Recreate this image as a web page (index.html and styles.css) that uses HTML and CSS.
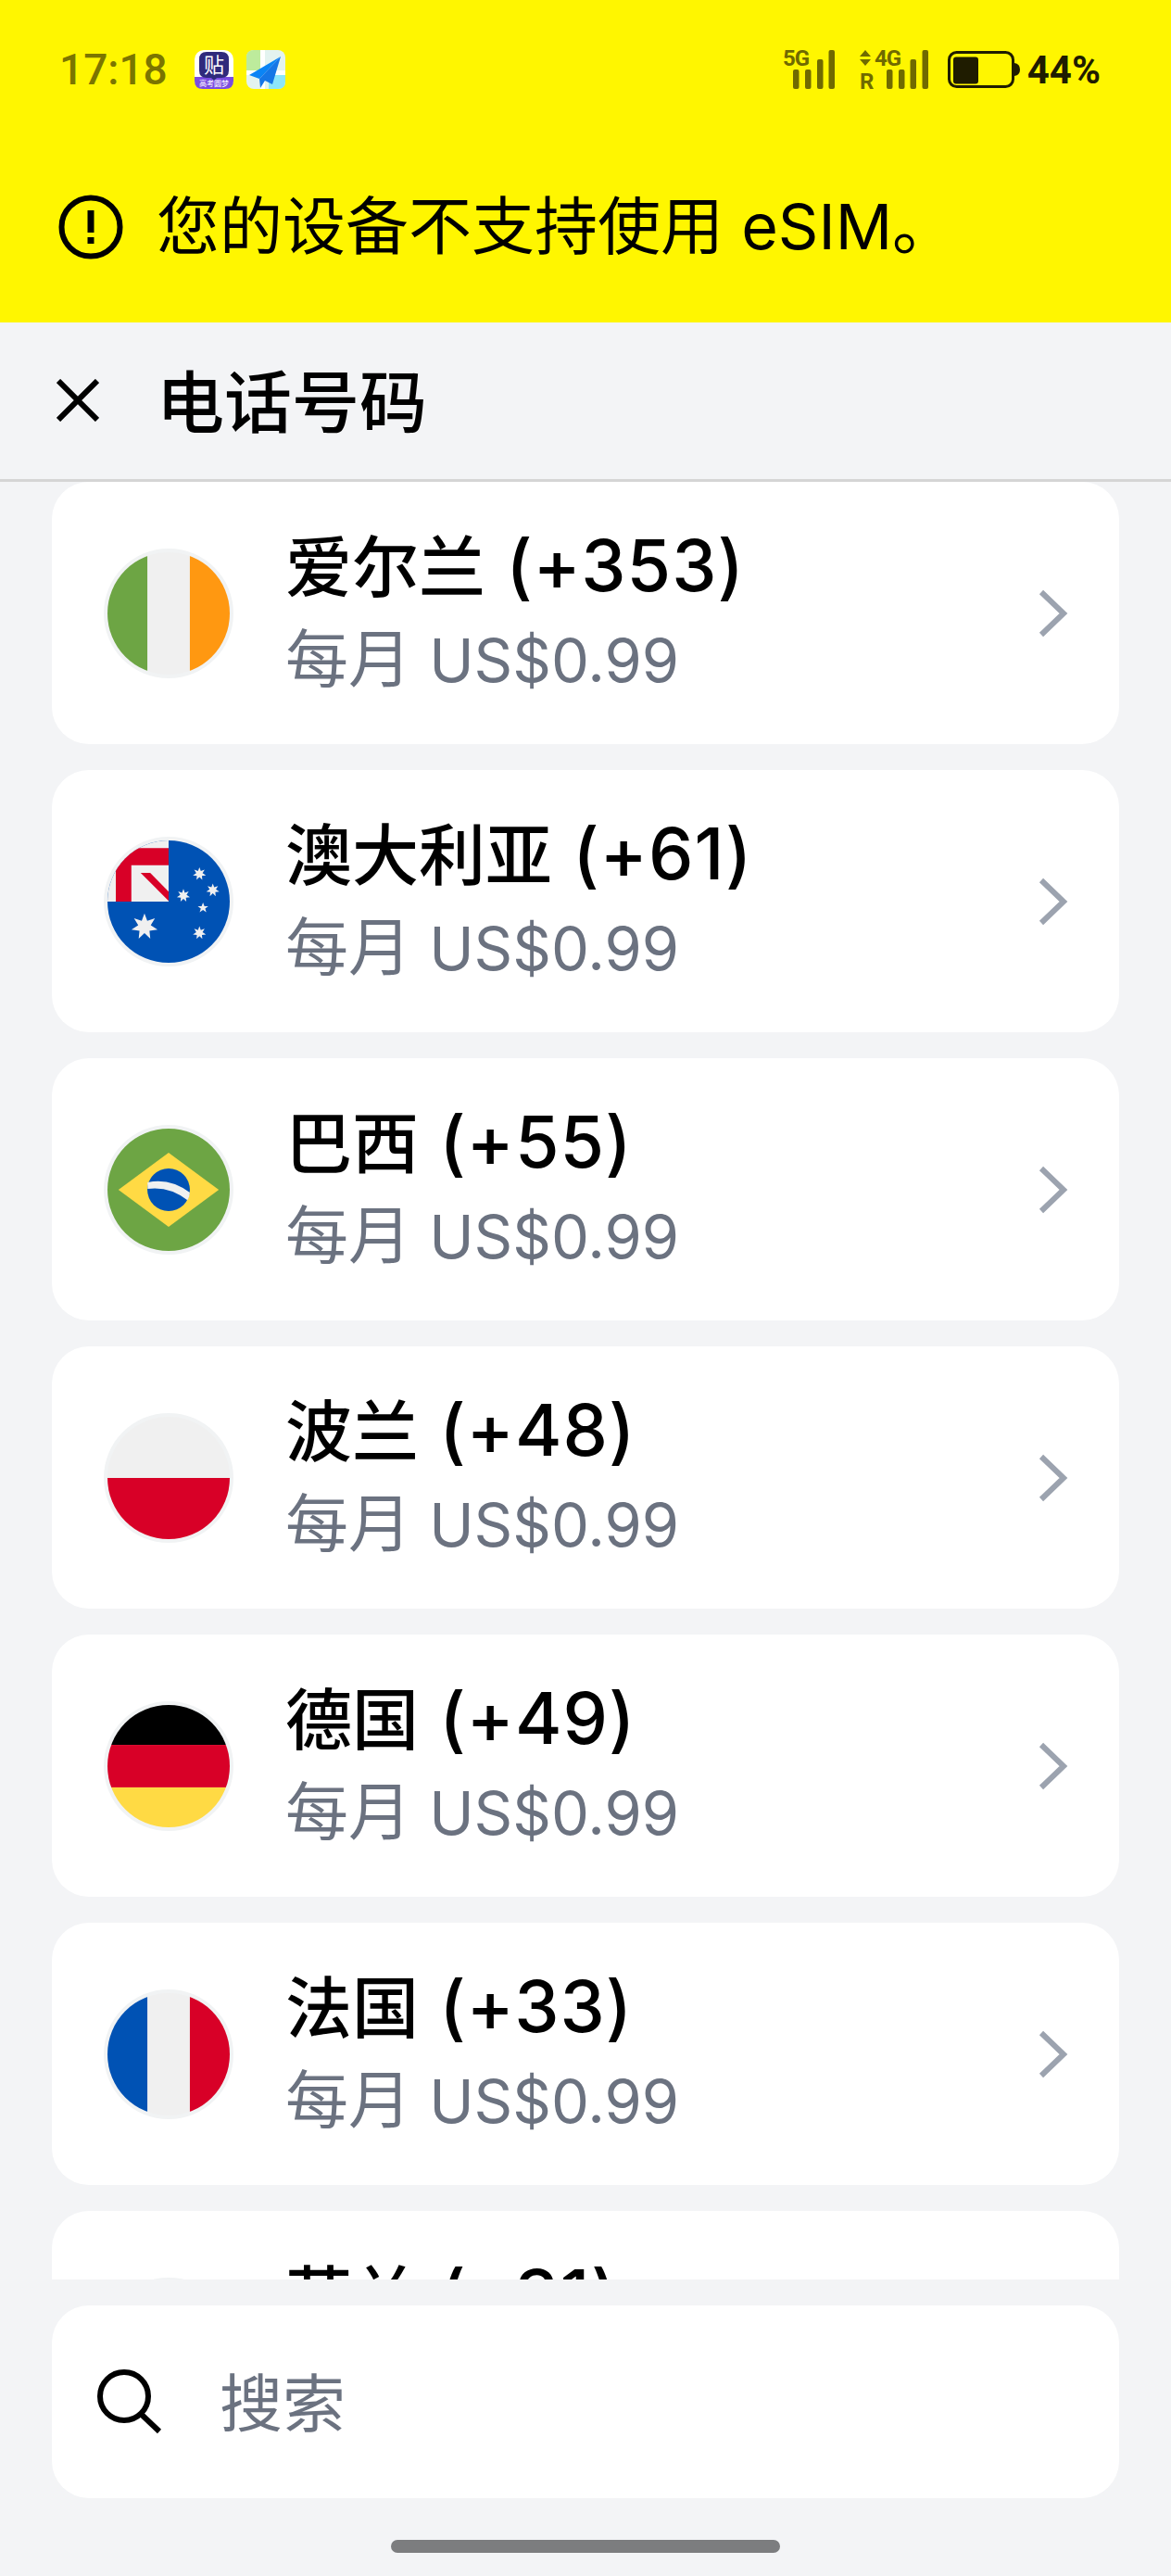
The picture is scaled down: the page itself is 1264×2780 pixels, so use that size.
FILE: index.html
```html
<!DOCTYPE html>
<html lang="zh-CN">
<head>
    <meta charset="UTF-8">
    <meta name="viewport" content="width=device-width, initial-scale=1.0">
    <title>电话号码</title>
    <link rel="stylesheet" href="styles.css">
</head>
<body>
    <svg class="defs" width="0" height="0" aria-hidden="true">
        <defs>
            <clipPath id="disc"><circle cx="256" cy="256" r="256"/></clipPath>
            <polygon id="star7" points="0,-100 20.8,-43.2 78.2,-62.3 46.8,-10.7 97.5,22.3 37.5,29.9 43.4,90.1 0,48 -43.4,90.1 -37.5,29.9 -97.5,22.3 -46.8,-10.7 -78.2,-62.3 -20.8,-43.2"/>
            <symbol id="chevron" viewBox="0 0 32 52">
                <path d="M3 3 L27 26 L3 49" fill="none" stroke="#9ca3af" stroke-width="6"/>
            </symbol>
        </defs>
    </svg>

    <header class="top-banner">
        <div class="status-bar">
            <span class="clock">17:18</span>
            <svg class="app-icon" viewBox="0 0 42 42">
                <rect width="42" height="42" rx="10" fill="#fff"/>
                <path d="M0 29 H42 V33 Q42 42 33 42 H9 Q0 42 0 33 Z" fill="#7a4ce0"/>
                <path d="M13 2 H29 Q37 2 37 10 V22 Q37 30 29 30 H24 L21 33 L18 30 H13 Q5 30 5 22 V10 Q5 2 13 2 Z" fill="#2f2a7c"/>
                <text class="app-glyph" x="21" y="24" text-anchor="middle">贴</text>
                <text class="app-tiny" x="21" y="39" text-anchor="middle">高考圆梦</text>
            </svg>
            <svg class="app-icon" viewBox="0 0 42 42">
                <rect width="42" height="42" rx="8" fill="#e3f3ef"/>
                <path d="M0 8 Q0 0 8 0 H15 V22 H0 Z" fill="#bdeb9c"/>
                <rect x="15" width="5" height="42" fill="#fff"/>
                <rect y="22" width="42" height="5" fill="#fff"/>
                <path d="M24 27 H42 V34 Q42 42 34 42 H24 Z" fill="#8de6fa"/>
                <path d="M37 7 L3 27 L14 31 Z" fill="#0a84f5"/>
                <path d="M37 7 L14 31 L15 41 L20 33 L28 37 Z" fill="#1576e6"/>
            </svg>
            <div class="status-right">
                <svg class="signal-five" viewBox="0 -6 56 56">
                    <text class="net-label" x="0" y="18">5G</text>
                    <rect x="11" y="22" width="6.5" height="21" rx="2"/>
                    <rect x="24" y="22" width="6.5" height="21" rx="2"/>
                    <rect x="37" y="11" width="6.5" height="32" rx="2"/>
                    <rect x="49.5" y="1" width="6.5" height="42" rx="2"/>
                </svg>
                <svg class="signal-four" viewBox="0 -6 74 56">
                    <path d="M6 1 L12 8 H0 Z M0 11 H12 L6 18 Z"/>
                    <text class="net-label" x="16" y="18">4G</text>
                    <text class="net-label" x="0" y="43">R</text>
                    <rect x="29" y="22" width="6.5" height="21" rx="2"/>
                    <rect x="42" y="22" width="6.5" height="21" rx="2"/>
                    <rect x="54.5" y="11" width="6.5" height="32" rx="2"/>
                    <rect x="67.5" y="1" width="6.5" height="42" rx="2"/>
                </svg>
                <svg class="battery" viewBox="0 0 78 40">
                    <rect x="1.5" y="1.5" width="69" height="37" rx="8" fill="none" stroke="#1f1c00" stroke-width="3"/>
                    <rect x="6" y="6.5" width="27" height="29" rx="3" fill="#1f1c00"/>
                    <path d="M72 13 Q78 14 78 20 Q78 26 72 27 Z" fill="#1f1c00"/>
                </svg>
                <span class="battery-level">44%</span>
            </div>
        </div>
        <div class="notice">
            <svg class="notice-icon" viewBox="0 0 70 70">
                <circle cx="35" cy="35" r="31.5" fill="none" stroke="#000" stroke-width="6"/>
                <rect x="31.5" y="17" width="7" height="24" fill="#000"/>
                <rect x="31.5" y="46" width="7" height="7" fill="#000"/>
            </svg>
            <span class="notice-text">您的设备不支持使用 eSIM。</span>
        </div>
    </header>

    <div class="title-bar">
        <svg class="close-icon" viewBox="0 0 46 46">
            <path d="M2 2 L44 44 M44 2 L2 44" fill="none" stroke="#000" stroke-width="6"/>
        </svg>
        <h1 class="page-title">电话号码</h1>
    </div>

    <main class="country-list">
        <a class="country-card">
            <span class="flag-ring">
                <svg class="flag" viewBox="0 0 512 512"><g clip-path="url(#disc)">
                    <rect width="512" height="512" fill="#f0f0f0"/>
                    <rect width="167" height="512" fill="#6da544"/>
                    <rect x="345" width="167" height="512" fill="#ff9811"/>
                </g></svg>
            </span>
            <span class="country-text">
                <span class="country-name">爱尔兰 <span class="dial">(+353)</span></span>
                <span class="country-price">每月 <span class="amount">US$0.99</span></span>
            </span>
            <svg class="chevron"><use href="#chevron"/></svg>
        </a>
        <a class="country-card">
            <span class="flag-ring">
                <svg class="flag" viewBox="0 0 512 512"><g clip-path="url(#disc)">
                    <rect width="512" height="512" fill="#0052b4"/>
                    <rect width="256" height="256" fill="#f0f0f0"/>
                    <path d="M35 32 H256 V104 H100 V256 H35 Z" fill="#d80027"/>
                    <path d="M139 136 H179 L256 214 V253 Z" fill="#d80027"/>
                    <use href="#star7" transform="translate(155 361) scale(.56)" fill="#f0f0f0"/>
                    <use href="#star7" transform="translate(385 140) scale(.28)" fill="#f0f0f0"/>
                    <use href="#star7" transform="translate(441 208) scale(.28)" fill="#f0f0f0"/>
                    <use href="#star7" transform="translate(318 231) scale(.28)" fill="#f0f0f0"/>
                    <use href="#star7" transform="translate(385 387) scale(.28)" fill="#f0f0f0"/>
                    <polygon points="400,260 406,275 422,275 409,285 414,301 400,291 386,301 391,285 378,275 394,275" fill="#f0f0f0"/>
                </g></svg>
            </span>
            <span class="country-text">
                <span class="country-name">澳大利亚 <span class="dial">(+61)</span></span>
                <span class="country-price">每月 <span class="amount">US$0.99</span></span>
            </span>
            <svg class="chevron"><use href="#chevron"/></svg>
        </a>
        <a class="country-card">
            <span class="flag-ring">
                <svg class="flag" viewBox="0 0 512 512"><g clip-path="url(#disc)">
                    <rect width="512" height="512" fill="#6da544"/>
                    <polygon points="46,256 256,101 466,256 256,411" fill="#ffda44"/>
                    <circle cx="256" cy="256" r="89" fill="#0052b4"/>
                    <path d="M168 225 Q262 205 345 268 Q343 288 335 300 Q260 240 168 252 Z" fill="#f0f0f0"/>
                </g></svg>
            </span>
            <span class="country-text">
                <span class="country-name">巴西 <span class="dial">(+55)</span></span>
                <span class="country-price">每月 <span class="amount">US$0.99</span></span>
            </span>
            <svg class="chevron"><use href="#chevron"/></svg>
        </a>
        <a class="country-card">
            <span class="flag-ring">
                <svg class="flag" viewBox="0 0 512 512"><g clip-path="url(#disc)">
                    <rect width="512" height="256" fill="#f0f0f0"/>
                    <rect y="256" width="512" height="256" fill="#d80027"/>
                </g></svg>
            </span>
            <span class="country-text">
                <span class="country-name">波兰 <span class="dial">(+48)</span></span>
                <span class="country-price">每月 <span class="amount">US$0.99</span></span>
            </span>
            <svg class="chevron"><use href="#chevron"/></svg>
        </a>
        <a class="country-card">
            <span class="flag-ring">
                <svg class="flag" viewBox="0 0 512 512"><g clip-path="url(#disc)">
                    <rect width="512" height="167" fill="#000"/>
                    <rect y="167" width="512" height="178" fill="#d80027"/>
                    <rect y="345" width="512" height="167" fill="#ffda44"/>
                </g></svg>
            </span>
            <span class="country-text">
                <span class="country-name">德国 <span class="dial">(+49)</span></span>
                <span class="country-price">每月 <span class="amount">US$0.99</span></span>
            </span>
            <svg class="chevron"><use href="#chevron"/></svg>
        </a>
        <a class="country-card">
            <span class="flag-ring">
                <svg class="flag" viewBox="0 0 512 512"><g clip-path="url(#disc)">
                    <rect width="512" height="512" fill="#f0f0f0"/>
                    <rect width="167" height="512" fill="#0052b4"/>
                    <rect x="345" width="167" height="512" fill="#d80027"/>
                </g></svg>
            </span>
            <span class="country-text">
                <span class="country-name">法国 <span class="dial">(+33)</span></span>
                <span class="country-price">每月 <span class="amount">US$0.99</span></span>
            </span>
            <svg class="chevron"><use href="#chevron"/></svg>
        </a>
        <!-- last card runs under the search area, its price line stays out of sight -->
        <a class="country-card">
            <span class="flag-ring">
                <svg class="flag" viewBox="0 0 512 512"><g clip-path="url(#disc)">
                    <rect width="512" height="167" fill="#a2001d"/>
                    <rect y="167" width="512" height="178" fill="#f0f0f0"/>
                    <rect y="345" width="512" height="167" fill="#0052b4"/>
                </g></svg>
            </span>
            <span class="country-text">
                <span class="country-name">荷兰 <span class="dial">(+31)</span></span>
                <span class="country-price">&nbsp;</span>
            </span>
            <svg class="chevron"><use href="#chevron"/></svg>
        </a>
    </main>

    <footer class="search-area">
        <div class="search-box">
            <svg class="search-icon" viewBox="0 0 70 70">
                <circle cx="29" cy="29" r="26" fill="none" stroke="#000" stroke-width="6"/>
                <path d="M47 48 L67 67" fill="none" stroke="#000" stroke-width="6"/>
            </svg>
            <span class="search-text">搜索</span>
        </div>
        <div class="home-bar"></div>
    </footer>
</body>
</html>
```

FILE: styles.css
```css
* {
    box-sizing: border-box;
}

body {
    margin: 0;
    height: 2780px;
    display: flex;
    flex-direction: column;
    overflow: hidden;
    background-color: #f3f4f6;
    color: #000;
    font-family: Inter, "Noto Sans CJK SC", sans-serif;
}

.defs {
    position: absolute;
}

/* Yellow area */
.top-banner {
    height: 348px;
    flex: none;
    background-color: #fff600;
}

.status-bar {
    height: 150px;
    display: flex;
    align-items: center;
    padding: 0 76px 0 64px;
    font-family: Roboto, "Noto Sans CJK SC", sans-serif;
}

.clock {
    margin-right: 29px;
    font-size: 46px;
    font-weight: 500;
    color: #7b7500;
}

.app-icon {
    width: 42px;
    height: 42px;
    margin-right: 14px;
}

.app-glyph {
    font-size: 22px;
    fill: #fff;
}

.app-tiny {
    font-size: 8px;
    fill: #fff;
}

.status-right {
    margin-left: auto;
    display: flex;
    align-items: center;
}

.status-right svg {
    fill: #706a00;
}

.signal-five {
    width: 56px;
    height: 56px;
    margin-right: 27px;
}

.signal-four {
    width: 74px;
    height: 56px;
    margin-right: 21px;
}

.net-label {
    font-size: 24px;
    font-weight: 700;
    letter-spacing: -1px;
}

.battery {
    width: 78px;
    height: 40px;
    margin-right: 8px;
}

.battery-level {
    font-size: 42px;
    font-weight: 700;
    color: #1f1c00;
}

.notice {
    height: 190px;
    display: flex;
    align-items: center;
    padding-left: 63px;
}

.notice-icon {
    width: 70px;
    height: 70px;
    margin-right: 36px;
}

.notice-text {
    margin-bottom: 12px;
    font-size: 68px;
}

/* Title */
.title-bar {
    height: 172px;
    flex: none;
    display: flex;
    align-items: center;
    padding: 0 0 4px 61px;
    box-shadow: inset 0 -4px 0 -1px #d5d5d5;
}

.close-icon {
    width: 46px;
    height: 46px;
    margin-right: 62px;
}

.page-title {
    margin: 0 0 6px;
    font-size: 73px;
    font-weight: 500;
}

/* Country cards */
.country-list {
    height: 1940px;
    flex: none;
    display: flex;
    flex-direction: column;
    gap: 28px;
    margin: 0 56px;
    overflow: hidden;
}

.country-card {
    height: 283px;
    flex: none;
    display: flex;
    align-items: center;
    padding: 0 55px 0 56px;
    background-color: #fff;
    border-radius: 40px;
}

.flag-ring {
    width: 140px;
    height: 140px;
    flex: none;
    margin-right: 56px;
    padding: 4px;
    border-radius: 50%;
    background-color: #f1f3f4;
}

.flag {
    display: block;
    width: 132px;
    height: 132px;
}

.country-text {
    flex: 1;
    display: flex;
    flex-direction: column;
}

.country-name {
    font-size: 72px;
    font-weight: 500;
    line-height: 98px;
}

.dial {
    margin-left: 3px;
    font-size: 77px;
    font-weight: 500;
    letter-spacing: 1px;
}

.country-price {
    margin-top: 1px;
    font-size: 68px;
    line-height: 98px;
    color: #6b7280;
}

.amount {
    font-size: 65px;
}

.chevron {
    width: 32px;
    height: 52px;
}

/* Search */
.search-area {
    flex: 1;
    padding: 28px 56px 0;
}

.search-box {
    height: 208px;
    display: flex;
    align-items: center;
    padding-left: 49px;
    background-color: #fff;
    border-radius: 40px;
}

.search-icon {
    width: 70px;
    height: 70px;
    margin-right: 62px;
}

.search-text {
    margin-bottom: 6px;
    font-size: 68px;
    color: #6b7280;
}

.home-bar {
    width: 420px;
    height: 14px;
    margin: 45px auto 0;
    border-radius: 7px;
    background-color: #7c7d7f;
}
```
